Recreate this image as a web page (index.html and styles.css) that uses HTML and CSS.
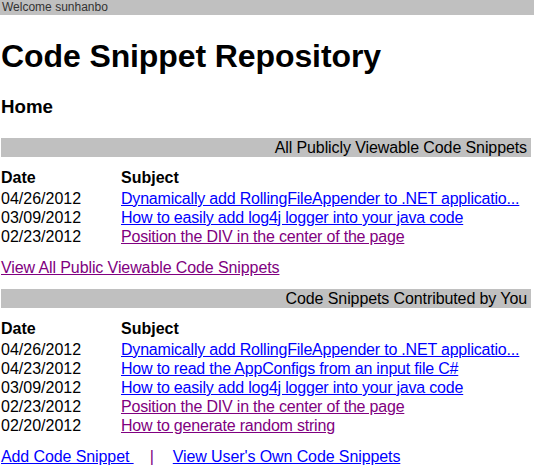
FILE: index.html
```html
<!DOCTYPE html>
<html lang="en">
<head>
    <meta charset="UTF-8">
    <meta name="viewport" content="width=device-width, initial-scale=1.0">
    <title>Code Snippet Repository</title>
    <link rel="stylesheet" href="styles.css">
</head>
<body>
    <div class="welcome">Welcome sunhanbo</div>

    <div class="page">
        <h1>Code Snippet Repository</h1>
        <h3>Home</h3>

        <!-- public snippets -->
        <div class="section-bar">All Publicly Viewable Code Snippets</div>
        <table class="snippets">
            <thead>
                <tr><th class="date">Date</th><th>Subject</th></tr>
            </thead>
            <tbody>
                <tr><td class="date">04/26/2012</td><td><a href="#">Dynamically add RollingFileAppender to .NET applicatio...</a></td></tr>
                <tr><td class="date">03/09/2012</td><td><a href="#">How to easily add log4j logger into your java code</a></td></tr>
                <tr><td class="date">02/23/2012</td><td><a href="#" class="visited">Position the DIV in the center of the page</a></td></tr>
            </tbody>
        </table>
        <div class="links">
            <a href="#" class="visited">View All Public Viewable Code Snippets</a>
        </div>

        <!-- user's own snippets -->
        <div class="section-bar">Code Snippets Contributed by You</div>
        <table class="snippets">
            <thead>
                <tr><th class="date">Date</th><th>Subject</th></tr>
            </thead>
            <tbody>
                <tr><td class="date">04/26/2012</td><td><a href="#">Dynamically add RollingFileAppender to .NET applicatio...</a></td></tr>
                <tr><td class="date">04/23/2012</td><td><a href="#">How to read the AppConfigs from an input file C#</a></td></tr>
                <tr><td class="date">03/09/2012</td><td><a href="#">How to easily add log4j logger into your java code</a></td></tr>
                <tr><td class="date">02/23/2012</td><td><a href="#" class="visited">Position the DIV in the center of the page</a></td></tr>
                <tr><td class="date">02/20/2012</td><td><a href="#" class="visited">How to generate random string</a></td></tr>
            </tbody>
        </table>
        <div class="links">
            <a href="#">Add Code Snippet </a><span class="sep">|</span><a href="#">View User's Own Code Snippets</a>
        </div>
    </div>
</body>
</html>
```

FILE: styles.css
```css
body {
    margin: 0;
    font-family: "Liberation Sans", Arial, sans-serif;
    font-size: 16px;
    color: #000;
    background-color: #fff;
}

.welcome {
    background-color: #c0c0c0;
    color: #333;
    font-size: 12px;
    line-height: 15px;
    height: 15px;
    padding-left: 2px;
}

.page {
    padding: 0 3px 0 1px;
}

h1 {
    font-size: 32px;
    line-height: 37px;
    letter-spacing: -0.1px;
    margin: 23px 0 0;
}

h3 {
    font-size: 18.72px;
    line-height: 22px;
    margin: 21px 0 20px;
}

.section-bar {
    background-color: #c0c0c0;
    height: 19px;
    line-height: 19px;
    text-align: right;
    padding-right: 4px;
    letter-spacing: -0.1px;
}

.snippets {
    border-collapse: collapse;
    margin-top: 10px;
}

.snippets th,
.snippets td {
    padding: 0;
    text-align: left;
    white-space: nowrap;
}

.snippets th {
    height: 22px;
    line-height: 22px;
}

.snippets td {
    height: 19px;
    line-height: 19px;
}

.snippets td a {
    letter-spacing: -0.2px;
}

.snippets .date {
    width: 120px;
}

a {
    color: #0000ff;
}

a.visited {
    color: #800080;
}

.links {
    margin-top: 12px;
    line-height: 19px;
    margin-bottom: 12px;
}

.links a {
    letter-spacing: -0.1px;
}

.sep {
    color: #800080;
    margin: 0 19px 0 16px;
}
```
